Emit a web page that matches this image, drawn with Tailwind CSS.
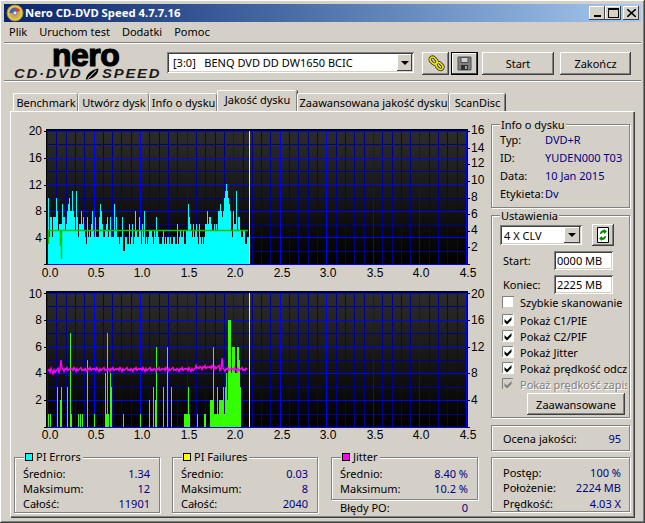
<!DOCTYPE html>
<html lang="pl">
<head>
<meta charset="utf-8">
<title>Nero CD-DVD Speed</title>
<script src="https://cdn.jsdelivr.net/npm/@tailwindcss/browser@4"></script>
</head>
<body class="m-0 overflow-hidden bg-[#d4d0c8]">
<div class="relative flex h-[523px] w-[645px] flex-col overflow-hidden whitespace-nowrap bg-[#d4d0c8] p-[4px] font-['Noto_Sans',Arial,sans-serif] text-[11px] leading-none text-black shadow-[inset_-1px_-1px_0_#404040,inset_1px_1px_0_#fff,inset_-2px_-2px_0_#808080]">

  <!-- title bar -->
  <div class="flex h-[18px] shrink-0 items-center bg-gradient-to-r from-[#0a246a] to-[#a6caf0] pl-[2px] pr-[2px]">
    <svg width="18" height="18" viewBox="0 0 18 18" class="mr-[1px] shrink-0">
      <circle cx="9" cy="9" r="8" fill="#e8c838" stroke="#9a8a40"/>
      <circle cx="9" cy="9" r="5.500" fill="#c8a860"/>
      <path d="M9 3.500a5.500 5.500 0 0 1 5 3.200L9 9z" fill="#e04030"/>
      <path d="M3.500 9a5.500 5.500 0 0 1 5.500-5.500V9z" fill="#4060c0"/>
      <circle cx="9" cy="9" r="2" fill="#e8e8f0" stroke="#505050" stroke-width=".6"/>
    </svg>
    <span class="text-[11.3px] font-bold leading-[18px] text-white">Nero CD-DVD Speed 4.7.7.16</span>
    <div class="ml-auto flex items-center">
      <div class="flex h-[14px] w-[16px] items-end justify-center bg-[#d4d0c8] pb-[3px] shadow-[inset_-1px_-1px_0_#404040,inset_1px_1px_0_#fff]"><div class="h-[2px] w-[7px] bg-black"></div></div>
      <div class="flex h-[14px] w-[16px] items-center justify-center bg-[#d4d0c8] shadow-[inset_-1px_-1px_0_#404040,inset_1px_1px_0_#fff]"><div class="h-[10px] w-[11px] border border-t-2 border-black"></div></div>
      <div class="ml-[2px] flex h-[14px] w-[16px] items-center justify-center bg-[#d4d0c8] shadow-[inset_-1px_-1px_0_#404040,inset_1px_1px_0_#fff]">
        <svg width="9" height="8" viewBox="0 0 9 8"><path d="M0 0l9 8M9 0L0 8" stroke="#000" stroke-width="1.6"/></svg>
      </div>
    </div>
  </div>

  <!-- menu -->
  <div class="flex h-[20px] shrink-0 items-center gap-[12px] pb-[1px] pl-[5px]">
    <span>Plik</span><span>Uruchom test</span><span>Dodatki</span><span>Pomoc</span>
  </div>
  <div class="h-[2px] shrink-0 border-t border-b border-t-[#808080] border-b-white"></div>

  <!-- toolbar -->
  <div class="flex h-[36px] shrink-0 items-start">
    <div class="flex h-full w-[163px] shrink-0 flex-col pl-[10px] font-['Liberation_Sans',Arial,sans-serif]">
      <div class="pl-[38px] text-[32px] font-bold leading-[23px] tracking-[-0.5px] [-webkit-text-stroke:1.2px_#000]">nero</div>
      <div class="mt-[1px] flex origin-left scale-x-[1.14] items-center text-[13px] font-bold italic leading-[12px] tracking-[1.6px] text-[#1a1a1a]">
        <span class="mr-[2px]">CD·DVD</span>
        <svg width="13" height="12" viewBox="0 0 14 12" class="mr-[2px] shrink-0"><path d="M1 12C2 5 7 1 13 0c0 6-4 11-12 12z" fill="#000"/><path d="M3 11L11 2" stroke="#d4d0c8"/></svg>
        <span>SPEED</span>
      </div>
    </div>
    <div class="mt-[8px] flex h-[21px] w-[247px] shrink-0 items-center bg-white pl-[6px] shadow-[inset_1px_1px_0_#808080,inset_-1px_-1px_0_#fff,inset_2px_2px_0_#404040,inset_-2px_-2px_0_#d4d0c8]">
      <span class="whitespace-pre">[3:0]   BENQ DVD DD DW1650 BCIC</span>
      <div class="ml-auto mr-[2px] flex h-[17px] w-[15px] items-center justify-center bg-[#d4d0c8] shadow-[inset_-1px_-1px_0_#404040,inset_1px_1px_0_#fff]">
        <div class="h-0 w-0 border-x-[4px] border-t-[4px] border-x-transparent border-t-black"></div>
      </div>
    </div>
    <div class="ml-[8px] mt-[8px] flex h-[23px] w-[27px] shrink-0 items-center justify-center bg-[#d4d0c8] shadow-[inset_-1px_-1px_0_#404040,inset_1px_1px_0_#fff,inset_-2px_-2px_0_#808080]">
      <svg width="18" height="18" viewBox="0 0 18 18"><g fill="none"><path d="M3 4.500a2.500 2.500 0 0 1 4-2l2.500 2.500a2.500 2.500 0 0 1-3.500 3.500L3.500 6zM9 10a2.500 2.500 0 0 1 4-2l2.500 2.500a2.500 2.500 0 0 1-3.500 3.500L9.500 11.500z" stroke="#333" stroke-width="3.200"/><path d="M3 4.500a2.500 2.500 0 0 1 4-2l2.500 2.500a2.500 2.500 0 0 1-3.500 3.500L3.500 6zM9 10a2.500 2.500 0 0 1 4-2l2.500 2.500a2.500 2.500 0 0 1-3.500 3.500L9.500 11.500z" stroke="#f0e800" stroke-width="1.600"/></g></svg>
    </div>
    <div class="ml-[2px] mt-[8px] flex h-[23px] w-[27px] shrink-0 items-center justify-center border border-black bg-[#d4d0c8] shadow-[inset_-1px_-1px_0_#404040,inset_1px_1px_0_#fff]">
      <svg width="15" height="15" viewBox="0 0 15 15"><path d="M1 1h13v13H1z" fill="#808080" stroke="#505050"/><path d="M4 1.500h7v5H4z" fill="#d4d0c8" stroke="#505050"/><path d="M4 9h7v5H4z" fill="#303030"/><path d="M8 10h2v3H8z" fill="#a0a0a0"/></svg>
    </div>
    <div class="ml-[4px] mt-[8px] flex h-[23px] w-[72px] shrink-0 items-center justify-center bg-[#d4d0c8] shadow-[inset_-1px_-1px_0_#404040,inset_1px_1px_0_#fff,inset_-2px_-2px_0_#808080]">Start</div>
    <div class="ml-[6px] mt-[8px] flex h-[23px] w-[71px] shrink-0 items-center justify-center bg-[#d4d0c8] shadow-[inset_-1px_-1px_0_#404040,inset_1px_1px_0_#fff,inset_-2px_-2px_0_#808080]">Zakończ</div>
  </div>
  <div class="h-[2px] shrink-0 border-t border-b border-t-[#808080] border-b-white"></div>

  <!-- tabs -->
  <div class="relative z-10 mt-[8px] flex h-[21px] shrink-0 items-end pl-[9px]">
    <div class="flex h-[18px] w-[65px] items-center justify-center rounded-t-[2px] border-l border-t border-white shadow-[inset_-1px_0_0_#808080,1px_0_0_#404040]">Benchmark</div>
    <div class="flex h-[18px] w-[71px] items-center justify-center rounded-t-[2px] border-l border-t border-white shadow-[inset_-1px_0_0_#808080,1px_0_0_#404040]">Utwórz dysk</div>
    <div class="flex h-[18px] w-[68px] items-center justify-center rounded-t-[2px] border-l border-t border-white shadow-[inset_-1px_0_0_#808080,1px_0_0_#404040]">Info o dysku</div>
    <div class="flex h-[21px] w-[80px] items-start justify-center rounded-t-[2px] border-l border-t border-white bg-[#d4d0c8] pt-[3px] shadow-[inset_-1px_0_0_#808080,1px_0_0_#404040]">Jakość dysku</div>
    <div class="flex h-[18px] w-[152px] items-center justify-center rounded-t-[2px] border-l border-t border-white shadow-[inset_-1px_0_0_#808080,1px_0_0_#404040]">Zaawansowana jakość dysku</div>
    <div class="flex h-[18px] w-[56px] items-center justify-center rounded-t-[2px] border-l border-t border-white shadow-[inset_-1px_0_0_#808080,1px_0_0_#404040]">ScanDisc</div>
  </div>

  <!-- tab panel -->
  <div class="ml-[6px] flex h-[406px] w-[624px] shrink-0 border-l border-t border-white pl-[1px] pt-[8px] shadow-[inset_-1px_-1px_0_#808080,1px_1px_0_#404040]">
    <div class="flex w-[478px] shrink-0 flex-col">
      <svg id="c1" width="478" height="168" viewBox="12 120 478 168" class="block shrink-0 font-['Liberation_Sans',Arial,sans-serif]" font-size="12" fill="#000">
        <defs>
          <linearGradient id="bgc" x1="0" y1="0" x2="0" y2="1"><stop offset="0" stop-color="#2c2c2c"/><stop offset="1" stop-color="#000"/></linearGradient>
        </defs>
        <rect x="46" y="129" width="422" height="136" fill="#000"/>
        <rect x="47" y="131" width="419" height="133" fill="url(#bgc)"/>
        <path id="m1" fill="none" stroke="#00008e" shape-rendering="crispEdges"/>
        <path id="M1" fill="none" stroke="#0000ff" shape-rendering="crispEdges"/>
        <path id="b1" fill="#00ffff" shape-rendering="crispEdges"/>
        <path id="l1" fill="none" stroke="#00c800" stroke-width="1.5"/>
        <path d="M249.500 131V264" stroke="#e8e8e8" shape-rendering="crispEdges"/>
        <path d="M44 131.500h2M44 158.500h2M44 185.500h2M44 211.500h2M44 238.500h2M44 264.500h2M468 131.500h2M468 148.500h2M468 164.500h2M468 181.500h2M468 198.500h2M468 214.500h2M468 231.500h2M468 247.500h2M468 264.500h2" stroke="#000" shape-rendering="crispEdges"/>
        <g text-anchor="end"><text x="42" y="135">20</text><text x="42" y="162">16</text><text x="42" y="189">12</text><text x="42" y="215">8</text><text x="42" y="242">4</text></g>
        <g><text x="471" y="134">16</text><text x="471" y="152">14</text><text x="471" y="167">12</text><text x="471" y="184">10</text><text x="471" y="201">8</text><text x="471" y="218">6</text><text x="471" y="234">4</text><text x="471" y="251">2</text></g>
        <g text-anchor="middle"><text x="50" y="277">0.0</text><text x="96" y="277">0.5</text><text x="142" y="277">1.0</text><text x="189" y="277">1.5</text><text x="235" y="277">2.0</text><text x="282" y="277">2.5</text><text x="328" y="277">3.0</text><text x="375" y="277">3.5</text><text x="421" y="277">4.0</text><text x="468" y="277">4.5</text></g>
      </svg>
      <svg id="c2" width="478" height="162" viewBox="12 288 478 162" class="block shrink-0 font-['Liberation_Sans',Arial,sans-serif]" font-size="12" fill="#000">
        <rect x="46" y="291" width="422" height="137" fill="#000"/>
        <rect x="47" y="293" width="419" height="134" fill="url(#bgc)"/>
        <path id="m2" fill="none" stroke="#00008e" shape-rendering="crispEdges"/>
        <path id="M2" fill="none" stroke="#0000ff" shape-rendering="crispEdges"/>
        <path id="b2" fill="#33ff00" shape-rendering="crispEdges"/>
        <path id="l2" fill="none" stroke="#ff00ff" stroke-width="1.4"/>
        <path d="M249.500 293V427" stroke="#e8e8e8" shape-rendering="crispEdges"/>
        <path d="M44 293.500h2M44 320.500h2M44 347.500h2M44 373.500h2M44 400.500h2M44 427.500h2M468 293.500h2M468 320.500h2M468 347.500h2M468 373.500h2M468 400.500h2M468 427.500h2" stroke="#000" shape-rendering="crispEdges"/>
        <g text-anchor="end"><text x="42" y="298">10</text><text x="42" y="324">8</text><text x="42" y="351">6</text><text x="42" y="377">4</text><text x="42" y="404">2</text></g>
        <g><text x="471" y="298">20</text><text x="471" y="324">16</text><text x="471" y="351">12</text><text x="471" y="377">8</text><text x="471" y="404">4</text></g>
        <g text-anchor="middle"><text x="50" y="439">0.0</text><text x="96" y="439">0.5</text><text x="142" y="439">1.0</text><text x="189" y="439">1.5</text><text x="235" y="439">2.0</text><text x="282" y="439">2.5</text><text x="328" y="439">3.0</text><text x="375" y="439">3.5</text><text x="421" y="439">4.0</text><text x="468" y="439">4.5</text></g>
      </svg>

      <!-- stat groups -->
      <div class="ml-[2px] mt-[7px] flex items-start">
        <div class="relative h-[56px] w-[146px] border border-[#808080] pl-[8px] pr-[9px] pt-[8px] shadow-[1px_1px_0_#fff,inset_1px_1px_0_#fff]">
          <div class="absolute -top-[7px] left-[9px] flex items-center gap-[3px] bg-[#d4d0c8] pl-[1px] pr-[2px]"><span class="h-[8px] w-[8px] border border-black bg-[#00ffff]"></span><span>PI Errors</span></div>
          <div class="flex h-[15px] items-center justify-between"><span>Średnio:</span><span class="text-[#000080]">1.34</span></div>
          <div class="flex h-[15px] items-center justify-between"><span>Maksimum:</span><span class="text-[#000080]">12</span></div>
          <div class="flex h-[15px] items-center justify-between"><span>Całość:</span><span class="text-[#000080]">11901</span></div>
        </div>
        <div class="relative ml-[12px] h-[56px] w-[146px] border border-[#808080] pl-[8px] pr-[9px] pt-[8px] shadow-[1px_1px_0_#fff,inset_1px_1px_0_#fff]">
          <div class="absolute -top-[7px] left-[9px] flex items-center gap-[3px] bg-[#d4d0c8] pl-[1px] pr-[2px]"><span class="h-[8px] w-[8px] border border-black bg-[#ffff00]"></span><span>PI Failures</span></div>
          <div class="flex h-[15px] items-center justify-between"><span>Średnio:</span><span class="text-[#000080]">0.03</span></div>
          <div class="flex h-[15px] items-center justify-between"><span>Maksimum:</span><span class="text-[#000080]">8</span></div>
          <div class="flex h-[15px] items-center justify-between"><span>Całość:</span><span class="text-[#000080]">2040</span></div>
        </div>
        <div class="ml-[13px] w-[147px]">
          <div class="relative h-[43px] border border-[#808080] pl-[8px] pr-[9px] pt-[8px] shadow-[1px_1px_0_#fff,inset_1px_1px_0_#fff]">
            <div class="absolute -top-[7px] left-[9px] flex items-center gap-[3px] bg-[#d4d0c8] pl-[1px] pr-[2px]"><span class="h-[8px] w-[8px] border border-black bg-[#ff00ff]"></span><span>Jitter</span></div>
            <div class="flex h-[15px] items-center justify-between"><span>Średnio:</span><span class="text-[#000080]">8.40 %</span></div>
            <div class="flex h-[15px] items-center justify-between"><span>Maksimum:</span><span class="text-[#000080]">10.2 %</span></div>
          </div>
          <div class="flex h-[15px] items-center justify-between pl-[9px] pr-[10px]"><span>Błędy PO:</span><span class="text-[#000080]">0</span></div>
        </div>
      </div>
    </div>

    <!-- right column -->
    <div class="ml-[1px] mt-[4px] flex w-[139px] shrink-0 flex-col">
      <div class="relative h-[84px] shrink-0 border border-[#808080] pl-[8px] pt-[5px] shadow-[1px_1px_0_#fff,inset_1px_1px_0_#fff]">
        <div class="absolute -top-[6px] left-[8px] bg-[#d4d0c8] px-[1px]">Info o dysku</div>
        <div class="flex h-[18px] items-center"><span class="w-[45px]">Typ:</span><span class="text-[#000080]">DVD+R</span></div>
        <div class="flex h-[18px] items-center"><span class="w-[45px]">ID:</span><span class="text-[#000080]">YUDEN000 T03</span></div>
        <div class="flex h-[18px] items-center"><span class="w-[45px]">Data:</span><span class="text-[#000080]">10 Jan 2015</span></div>
        <div class="flex h-[18px] items-center"><span class="w-[45px]">Etykieta:</span><span class="text-[#000080]">Dv</span></div>
      </div>

      <div class="relative mt-[7px] h-[203px] shrink-0 border border-[#808080] pt-[8px] shadow-[1px_1px_0_#fff,inset_1px_1px_0_#fff]">
        <div class="absolute -top-[6px] left-[8px] bg-[#d4d0c8] px-[1px]">Ustawienia</div>
        <div class="flex items-center pl-[8px]">
          <div class="flex h-[20px] w-[82px] items-center bg-white pl-[4px] shadow-[inset_1px_1px_0_#808080,inset_-1px_-1px_0_#fff,inset_2px_2px_0_#404040,inset_-2px_-2px_0_#d4d0c8]">
            <span>4 X CLV</span>
            <div class="ml-auto mr-[2px] flex h-[16px] w-[16px] items-center justify-center bg-[#d4d0c8] shadow-[inset_-1px_-1px_0_#404040,inset_1px_1px_0_#fff]"><div class="h-0 w-0 border-x-[4px] border-t-[4px] border-x-transparent border-t-black"></div></div>
          </div>
          <div class="ml-[10px] flex h-[22px] w-[22px] items-center justify-center bg-[#d4d0c8] shadow-[inset_-1px_-1px_0_#404040,inset_1px_1px_0_#fff,inset_-2px_-2px_0_#808080]">
            <svg width="12" height="16" viewBox="0 0 12 16"><path d="M.5.500h11v15H.5z" fill="#fff" stroke="#000"/><path d="M3 7c0-3 2-4 4-4V2l3 2.500L7 7V5.500C5 5.500 4.500 6 4.500 7zM9 9c0 3-2 4-4 4v1l-3-2.500L5 9v1.500C7 10.500 7.500 10 7.500 9z" fill="#008a00"/></svg>
          </div>
        </div>
        <div class="mt-[5px] flex h-[19px] items-center pl-[11px]">
          <span class="w-[51px]">Start:</span>
          <div class="flex h-[19px] w-[59px] items-center bg-white pl-[3px] shadow-[inset_1px_1px_0_#808080,inset_-1px_-1px_0_#fff,inset_2px_2px_0_#404040,inset_-2px_-2px_0_#d4d0c8]">0000 MB</div>
        </div>
        <div class="mt-[5px] flex h-[19px] items-center pl-[11px]">
          <span class="w-[51px]">Koniec:</span>
          <div class="flex h-[19px] w-[59px] items-center bg-white pl-[3px] shadow-[inset_1px_1px_0_#808080,inset_-1px_-1px_0_#fff,inset_2px_2px_0_#404040,inset_-2px_-2px_0_#d4d0c8]">2225 MB</div>
        </div>

        <div class="flex h-[16px] w-[135px] items-center overflow-hidden pl-[10px]">
          <span class="mr-[6px] h-[12px] w-[12px] shrink-0 bg-white shadow-[inset_1px_1px_0_#808080,inset_-1px_-1px_0_#d4d0c8]"></span>Szybkie skanowanie
        </div>
        <div class="mt-[2px] flex h-[16px] w-[135px] items-center overflow-hidden pl-[10px]">
          <svg width="12" height="12" viewBox="0 0 12 12" class="mr-[6px] shrink-0"><path d="M0 0h12v12H0z" fill="#fff"/><path d="M.5 11V.5H11" fill="none" stroke="#808080"/><path d="M2.500 5l2.500 2.500L9.500 3v3L5 10.500 2.500 8z" fill="#000"/></svg>Pokaż C1/PIE
        </div>
        <div class="flex h-[16px] w-[135px] items-center overflow-hidden pl-[10px]">
          <svg width="12" height="12" viewBox="0 0 12 12" class="mr-[6px] shrink-0"><path d="M0 0h12v12H0z" fill="#fff"/><path d="M.5 11V.5H11" fill="none" stroke="#808080"/><path d="M2.500 5l2.500 2.500L9.500 3v3L5 10.500 2.500 8z" fill="#000"/></svg>Pokaż C2/PIF
        </div>
        <div class="flex h-[16px] w-[135px] items-center overflow-hidden pl-[10px]">
          <svg width="12" height="12" viewBox="0 0 12 12" class="mr-[6px] shrink-0"><path d="M0 0h12v12H0z" fill="#fff"/><path d="M.5 11V.5H11" fill="none" stroke="#808080"/><path d="M2.500 5l2.500 2.500L9.500 3v3L5 10.500 2.500 8z" fill="#000"/></svg>Pokaż Jitter
        </div>
        <div class="flex h-[16px] w-[135px] items-center overflow-hidden pl-[10px]">
          <svg width="12" height="12" viewBox="0 0 12 12" class="mr-[6px] shrink-0"><path d="M0 0h12v12H0z" fill="#fff"/><path d="M.5 11V.5H11" fill="none" stroke="#808080"/><path d="M2.500 5l2.500 2.500L9.500 3v3L5 10.500 2.500 8z" fill="#000"/></svg>Pokaż prędkość odczytu
        </div>
        <div class="flex h-[16px] w-[135px] items-center overflow-hidden pl-[10px] text-[#808080] [text-shadow:1px_1px_0_#fff]">
          <svg width="12" height="12" viewBox="0 0 12 12" class="mr-[6px] shrink-0"><path d="M0 0h12v12H0z" fill="#d4d0c8"/><path d="M.5 11V.5H11" fill="none" stroke="#808080"/><path d="M2.500 5l2.500 2.500L9.500 3v3L5 10.500 2.500 8z" fill="#808080"/></svg>Pokaż prędkość zapisu
        </div>
        <div class="ml-[35px] mt-[1px] flex h-[22px] w-[98px] items-center justify-center bg-[#d4d0c8] shadow-[inset_-1px_-1px_0_#404040,inset_1px_1px_0_#fff,inset_-2px_-2px_0_#808080]">Zaawansowane</div>
      </div>

      <div class="mt-[7px] flex h-[26px] shrink-0 items-center justify-between border border-[#808080] pl-[11px] pr-[8px] shadow-[1px_1px_0_#fff,inset_1px_1px_0_#fff]">
        <span>Ocena jakości:</span><span class="text-[#000080]">95</span>
      </div>
      <div class="mt-[6px] h-[55px] shrink-0 border border-[#808080] pl-[11px] pr-[8px] pt-[7px] shadow-[1px_1px_0_#fff,inset_1px_1px_0_#fff]">
        <div class="flex h-[15px] items-center justify-between"><span>Postęp:</span><span class="text-[#000080]">100 %</span></div>
        <div class="flex h-[15px] items-center justify-between"><span>Położenie:</span><span class="text-[#000080]">2224 MB</span></div>
        <div class="flex h-[16px] items-center justify-between"><span>Prędkość:</span><span class="text-[#000080]">4.03 X</span></div>
      </div>
    </div>
  </div>
</div>

<script>
(function () {
  var $ = function (id) { return document.getElementById(id); };
  var X = [];
  for (var k = 0; k <= 45; k++) X.push(Math.round(47 + 9.311 * k));
  function grid(top, bot, n, majorEvery, minId, majId) {
    var mi = '', ma = '';
    X.forEach(function (x, i) {
      var s = 'M' + (x + .5) + ' ' + top + 'V' + bot;
      if (i % 5 === 0) ma += s; else mi += s;
    });
    for (var j = 0; j <= n; j++) {
      var y = Math.round(top + (bot - top) * j / n) + .5;
      var s = 'M47 ' + y + 'H467';
      if (j % majorEvery === 0) ma += s; else mi += s;
    }
    $(minId).setAttribute('d', mi);
    $(majId).setAttribute('d', ma);
  }
  grid(131, 264, 10, 2, 'm1', 'M1');
  grid(293, 427, 10, 2, 'm2', 'M2');

  /* PI errors, one value per pixel from x = 48 */
  var pie = [10,4,7,7,4,7,7,7,10,8,5,6,6,6,9,7,7,5,6,8,9,10,8,8,11,8,7,5,11,7,4,6,6,8,6,7,5,4,3,7,4,5,4,6,8,5,4,7,4,4,4,7,9,8,6,4,4,5,6,7,4,5,7,4,4,4,9,5,7,4,4,3,4,4,7,2,2,4,4,3,3,6,3,4,6,3,4,8,5,4,4,7,5,3,6,4,8,3,4,3,4,5,5,5,4,3,5,4,7,5,4,3,3,3,4,5,3,4,3,4,4,3,4,3,3,4,4,3,3,6,3,4,5,4,4,5,3,3,5,5,9,7,6,5,4,6,4,5,6,4,3,6,4,3,4,3,4,6,6,8,6,7,7,6,5,5,6,5,6,5,8,8,9,8,7,8,10,11,12,11,10,9,8,5,4,8,6,6,11,5,7,7,5,4,4,5,5,3,3,4,4,4];
  var d = 'M48 264';
  pie.forEach(function (v) { d += 'V' + Math.round(264 - 6.65 * v) + 'h1'; });
  $('b1').setAttribute('d', d + 'V264z');
  $('l1').setAttribute('d', 'M48.500 244V230.500H60.500V245H61.500V259V230.500H248');

  /* PI failures */
  var pif = {48:1,50:1,57:3,60:2,61:3,67:3,70:7,71:1,78:1,80:1,82:1,87:5,94:1,105:4,106:1,107:7,108:1,110:4,111:3,123:1,140:1,149:2,153:3,155:2,156:6,163:3,167:6,171:3,184:1,185:1,186:1,187:1,188:3,189:1,197:1,204:1,205:1,210:2,211:2,212:2,213:6,214:1,215:1,216:1,217:3,218:1,219:2,220:2,221:2,222:2,223:3,224:1,225:3,226:4,227:2,228:8,229:8,230:8,231:4,232:6,233:6,234:6,235:4,236:4,237:6,238:6,239:5,240:3,249:1};
  var p = '';
  for (var x in pif) { var t = Math.round(427 - 13.4 * pif[x]); p += 'M' + x + ' 427V' + t + 'h1V427z'; }
  $('b2').setAttribute('d', p);

  /* Jitter */
  var w = [0,-1,1,-2,0,2,-1,1,0,-1,-2,1,0,1,-1,0,2,-1,0,-2,1,0,-1];
  var l = '';
  for (var i = 0; i < 200; i++) {
    var px = 48 + i;
    var base = i < 12 ? 371 : (px > 195 && px < 220 ? 367.5 : 369.5);
    var y = base + w[i % 23] * (i < 12 ? 1.4 : 1);
    if (px === 61) y = 360;
    if (px === 222) y = 358;
    l += (i ? 'L' : 'M') + px + ' ' + y;
  }
  $('l2').setAttribute('d', l);
})();
</script>
</body>
</html>
